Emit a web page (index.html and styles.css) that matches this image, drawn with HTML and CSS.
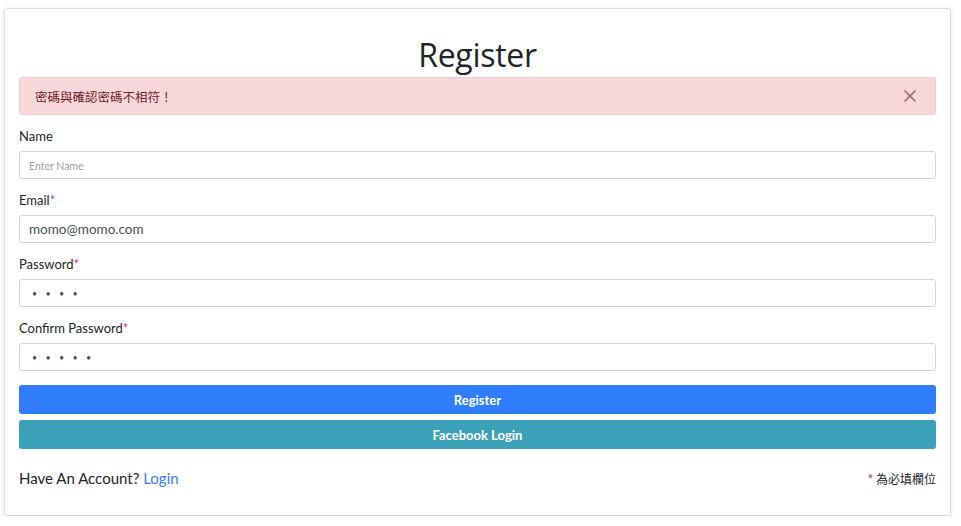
FILE: index.html
```html
<!DOCTYPE html>
<html lang="zh-Hant">
<head>
<meta charset="utf-8">
<title>Register</title>
<link rel="stylesheet" href="styles.css">
</head>
<body>
<div class="card">
  <h1 class="title">Register</h1>
  <div class="alert">
    <span>密碼與確認密碼不相符！</span>
    <svg class="close" width="14" height="14" viewBox="0 0 14 14"><path d="M1.5 1.5L12.5 12.5M12.5 1.5L1.5 12.5" stroke="#a0656b" stroke-width="1.6" fill="none"/></svg>
  </div>
  <form class="form">
    <div class="group">
      <label class="label">Name</label>
      <input class="input" type="text" placeholder="Enter Name">
    </div>
    <div class="group">
      <label class="label">Email<span class="req">*</span></label>
      <input class="input" type="text" value="momo@momo.com">
    </div>
    <div class="group">
      <label class="label">Password<span class="req">*</span></label>
      <div class="input dots">• • • •</div>
    </div>
    <div class="group">
      <label class="label">Confirm Password<span class="req">*</span></label>
      <div class="input dots">• • • • •</div>
    </div>
    <button type="button" class="btn btn-primary">Register</button>
    <button type="button" class="btn btn-info">Facebook Login</button>
  </form>
  <div class="footer">
    <span class="have">Have An Account? <a class="link" href="#">Login</a></span>
    <span class="note"><span class="req">*</span> 為必填欄位</span>
  </div>
</div>
</body>
</html>
```
FILE: styles.css
```css
* { box-sizing: border-box; }
body {
  margin: 0;
  background: #fff;
  font-family: Lato, "Noto Sans", "Noto Sans CJK TC", sans-serif;
  color: #212529;
}
.card {
  margin: 8px 10px 0 4px;
  height: 508px;
  border: 1px solid #dcdcdc;
  border-radius: 3px;
  box-shadow: 0 1px 4px rgba(0,0,0,0.12);
  padding: 0 14px;
}
.title {
  margin: 26px 0 0;
  text-align: center;
  font-weight: 400;
  font-size: 32px;
  line-height: 40px;
  height: 42px;
  color: #212529;
  font-family: "Open Sans", sans-serif;
  letter-spacing: -0.3px;
}
.alert {
  height: 38px;
  background: #f8d7da;
  border: 1px solid #f5c6cb;
  border-radius: 3px;
  color: #721c24;
  font-size: 12.5px;
  font-family: "Noto Sans CJK TC", sans-serif;
  display: flex;
  align-items: center;
  justify-content: space-between;
  padding: 0 18px 0 15px;
}
.close { display: block; }
.form { display: flex; flex-direction: column; margin-top: 11px; }
.group { display: flex; flex-direction: column; margin-bottom: 11px; }
.label {
  font-size: 13px;
  line-height: 20px;
  margin-bottom: 5px;
  color: #212529;
}
.req { color: #e0306b; }
.input {
  height: 28px;
  border: 1px solid #ced4da;
  border-radius: 3px;
  padding: 0 9px;
  font-family: inherit;
  font-size: 13.5px;
  color: #495057;
  display: flex;
  align-items: center;
  outline: none;
}
.input::placeholder { color: #9a9ea2; font-size: 10.5px; }
.dots { font-size: 9px; letter-spacing: 3px; padding-left: 12px; color: #495057; }
.btn {
  height: 29px;
  border: none;
  border-radius: 3px;
  color: #fff;
  font-family: inherit;
  font-size: 13px;
  font-weight: 700;
}
.btn-primary { background: #307cff; margin-top: 3px; }
.btn-info { background: #3ba1b8; margin-top: 6px; }
.footer {
  display: flex;
  justify-content: space-between;
  align-items: center;
  margin-top: 20px;
}
.have { font-size: 15px; color: #212529; }
.link { color: #3d7cff; text-decoration: none; }
.note { font-size: 12px; font-family: "Noto Sans CJK TC", sans-serif; }
```
